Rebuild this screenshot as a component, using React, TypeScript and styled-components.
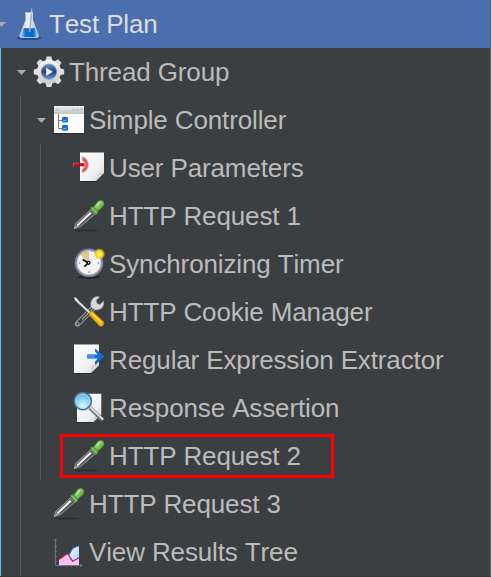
import React from 'react';
import styled, { createGlobalStyle } from 'styled-components';

const GlobalStyle = createGlobalStyle`
  body { margin: 0; background: #3c3f41; }
`;

const TreePanel = styled.div`
  box-sizing: border-box;
  width: 491px;
  height: 577px;
  overflow: hidden;
  display: flex;
  flex-direction: column;
  background: #3c3f41;
  border-right: 1px solid #616263;
  border-bottom: 1px solid #35373a;
  font-family: 'Liberation Sans', Arial, sans-serif;
  font-size: 26px;
  font-kerning: none;
  letter-spacing: -0.13px;
`;

const Row = styled.div<{ $selected?: boolean }>`
  box-sizing: border-box;
  flex: 0 0 48px;
  height: 48px;
  display: flex;
  align-items: center;
  background: ${(p) => (p.$selected ? '#4b6eaf' : '#3c3f41')};
  color: ${(p) => (p.$selected ? '#dcdcdc' : '#bbbbbb')};
  box-shadow: ${(p) => (p.$selected ? 'none' : 'inset 1px 0 0 #72b4f5')};
`;

const Cell = styled.span<{ $first?: boolean; $guide?: boolean }>`
  box-sizing: border-box;
  flex: 0 0 20px;
  height: 48px;
  display: flex;
  align-items: center;
  padding-left: 4px;
  margin-left: ${(p) => (p.$first ? '-7px' : '0')};
  background: ${(p) =>
    p.$guide ? 'linear-gradient(#55585a, #55585a) 7px 0 / 1px 100% no-repeat' : 'none'};
`;

const Arrow = styled.svg`
  flex: none;
  width: 9px;
  height: 5px;
  margin-top: 1px;
  fill: #adadad;
`;

const IconBox = styled.svg`
  flex: 0 0 32px;
  width: 32px;
  height: 32px;
  overflow: visible;
`;

const Label = styled.span`
  margin-left: 4px;
  line-height: 30px;
  white-space: nowrap;
`;

const Highlight = styled.div`
  position: absolute;
  box-sizing: border-box;
  left: 60px;
  top: 434px;
  width: 274px;
  height: 44px;
  border: 3px solid #fe0000;
`;

const FlaskIcon = () => (
  <IconBox viewBox="0 0 32 32">
    <defs>
      <linearGradient id="flGlass" x1="0" x2="1">
        <stop offset="0" stopColor="#b9c6de" />
        <stop offset=".45" stopColor="#fbfcff" />
        <stop offset="1" stopColor="#a9bad9" />
      </linearGradient>
      <linearGradient id="flLiquid" x1="0" x2="1">
        <stop offset="0" stopColor="#8fc5f5" />
        <stop offset=".25" stopColor="#0b72da" />
        <stop offset=".75" stopColor="#0565cf" />
        <stop offset="1" stopColor="#8cbdf0" />
      </linearGradient>
    </defs>
    <ellipse cx="16" cy="30" rx="12.5" ry="2" fill="#1e3768" opacity=".65" />
    <path d="M12.5 5H20V12L25.8 27Q26.6 30 24 30H8.5Q5.7 30 6.5 27L12.5 12Z" fill="url(#flGlass)" opacity=".93" />
    <path d="M10.5 20.8H22L23.8 26.8Q24.2 29.2 22.5 29.2H10Q8.2 29.2 8.6 26.8Z" fill="url(#flLiquid)" />
    <path d="M10.5 20.8H22" stroke="#3059a2" strokeWidth="1" />
    <path d="M18.8 .5L18 11L16.5 24" stroke="#a7b0bf" strokeWidth="1.5" fill="none" />
    <path d="M12 5H20" stroke="#f3f6fc" />
  </IconBox>
);

const TEETH = [0, 45, 90, 135, 180, 225, 270, 315];

const GearIcon = () => (
  <IconBox viewBox="0 0 32 32">
    <defs>
      <linearGradient id="grBody" x1="0" y1="0" x2="0" y2="1">
        <stop offset="0" stopColor="#f7f7f7" />
        <stop offset="1" stopColor="#c9c9c9" />
      </linearGradient>
      <linearGradient id="grBlue" x1="0" y1="0" x2="0" y2="1">
        <stop offset="0" stopColor="#6f8dbb" />
        <stop offset=".5" stopColor="#1f4380" />
        <stop offset="1" stopColor="#6796d3" />
      </linearGradient>
    </defs>
    <g fill="#dedede">
      {TEETH.map((a) => (
        <path key={a} d="M12.5 5L13.6 .6H18.4L19.5 5Z" transform={`rotate(${a} 16 15.8)`} />
      ))}
    </g>
    <circle cx="16" cy="15.8" r="12" fill="url(#grBody)" />
    <circle cx="16" cy="15.8" r="8.2" fill="#a5adbb" />
    <circle cx="16" cy="15.8" r="7.5" fill="url(#grBlue)" />
    <path d="M13.2 11.8L19.8 15.8L13.2 19.8Z" fill="#f2f5fa" />
  </IconBox>
);

const ControllerIcon = () => (
  <IconBox viewBox="0 0 32 32">
    <defs>
      <linearGradient id="ctBar" x1="0" y1="0" x2="0" y2="1">
        <stop offset="0" stopColor="#eeeeee" />
        <stop offset="1" stopColor="#c3c3c3" />
      </linearGradient>
    </defs>
    <path d="M.5 29.5H31.5" stroke="#2a2c2e" />
    <rect x="1" y="2" width="30" height="27" fill="#fdfdfd" />
    <rect x="1" y="2" width="30" height="8" fill="url(#ctBar)" />
    <path d="M3 5.5H6M19 5.5H22M23 5.5H26M27 5.5H30" stroke="#bdbdbd" strokeWidth="1.5" />
    <path d="M5.5 10V24.5H9M5.5 16.5H9" stroke="#707780" fill="none" />
    <rect x="9" y="13" width="6" height="5.5" rx="1.2" fill="#1470d8" />
    <rect x="9" y="21" width="6" height="5.7" rx="1.2" fill="#1470d8" />
    <path d="M10 17L13.5 16M10 25L13.5 24" stroke="#6fb1f5" strokeWidth="1.2" />
  </IconBox>
);

const PageDefs = ({ id }: { id: string }) => (
  <defs>
    <linearGradient id={id} x1="0" y1="0" x2="1" y2="1">
      <stop offset="0" stopColor="#ffffff" />
      <stop offset=".65" stopColor="#f0f0f0" />
      <stop offset="1" stopColor="#cfcfcf" />
    </linearGradient>
  </defs>
);

const ParametersIcon = () => (
  <IconBox viewBox="0 0 32 32">
    <PageDefs id="pgParams" />
    <path d="M6.5 29.5H24" stroke="#27292b" />
    <path d="M7 .5H31V21L23 29H7Z" fill="url(#pgParams)" />
    <path d="M31 21Q28 23 25.5 22.2Q25.5 27 22.5 29Z" fill="#a9aaa9" />
    <path d="M29.5 21.8Q27.5 23.4 26 23L24.5 26.5Z" fill="#ffffff" />
    <path d="M9.2 4.6Q15.3 7 15.3 12.7Q15.3 18.3 9.2 20.8L9.2 17.2Q12.3 15.3 12.3 12.7Q12.3 10 9.2 8.2Z" fill="#dc5658" stroke="#eda2a3" strokeWidth=".8" />
    <path d="M.5 11.2H11.5V14.3H.5Z" fill="#cd0708" />
    <path d="M.5 14.3V11.2H6" stroke="#e6787a" strokeWidth=".6" fill="none" />
  </IconBox>
);

const PipetteIcon = () => (
  <IconBox viewBox="0 0 32 32">
    <defs>
      <linearGradient id="ppBulb" x1="0" y1="0" x2="1" y2="1">
        <stop offset="0" stopColor="#b5e795" />
        <stop offset=".5" stopColor="#7ac558" />
        <stop offset="1" stopColor="#4c9a3c" />
      </linearGradient>
    </defs>
    <ellipse cx="14" cy="30.6" rx="13" ry="1" fill="#202224" opacity=".6" />
    <path d="M1.3 28.4L2.6 23.6L17.6 9.8L21.8 14.2L7.5 26.4Z" fill="#63676a" stroke="#a8abac" strokeWidth=".8" />
    <path d="M4.2 25.6L17.8 12.8" stroke="#f5f5f5" strokeWidth="1.9" />
    <path d="M6.5 25.8L20 14" stroke="#404345" strokeWidth=".9" />
    <path d="M1.4 28.4L5.8 25.2" stroke="#d0d0d0" strokeWidth=".8" />
    <path d="M20.4 7.4L25 1.6Q27.5 -.4 30 1.4Q31.8 4 29.7 6.5L24.6 11.3Z" fill="url(#ppBulb)" stroke="#5aa646" strokeWidth=".5" />
    <path d="M17.3 8Q19 5.7 21.2 7.3L24.8 11Q25.4 13.3 22.8 14.7Z" fill="#64b449" stroke="#3c8632" strokeWidth=".6" />
    <path d="M18.8 8L23.2 12.7" stroke="#8fd071" strokeWidth="1" />
    <path d="M23.7 6.5L27 2.3" stroke="#c5edab" strokeWidth="1.2" />
  </IconBox>
);

const TimerIcon = () => (
  <IconBox viewBox="0 0 32 32">
    <defs>
      <radialGradient id="tmSun">
        <stop offset="0" stopColor="#ffffb0" />
        <stop offset=".4" stopColor="#fff02e" />
        <stop offset="1" stopColor="#e4cc0b" />
      </radialGradient>
    </defs>
    <ellipse cx="16" cy="29" rx="11" ry="1.8" fill="#222426" />
    <circle cx="16" cy="14.8" r="13.2" fill="#f3f3f2" stroke="#8281a7" strokeWidth="2.2" />
    <circle cx="16" cy="14.8" r="12" fill="none" stroke="#c9c7d4" strokeWidth="1" />
    <path d="M15.3 14.6L8.4 6.8Q11.5 4 15.3 4.1Z" fill="#e8cc83" stroke="#c5a557" strokeWidth=".6" />
    <path d="M15.3 15L9.6 11.6M15.5 14.8L11.3 18.7" stroke="#141414" strokeWidth="1.7" />
    <circle cx="15.5" cy="14.8" r="2.1" fill="#080808" />
    <circle cx="15.5" cy="14.8" r=".7" fill="#ffffff" />
    <path d="M16 23.3V25M5.7 15H7.4M24.6 15H26.3" stroke="#9d9da2" strokeWidth="1.6" />
    <circle cx="26.4" cy="6" r="5.4" fill="#e6d535" opacity=".45" />
    <circle cx="26.4" cy="6" r="4.3" fill="url(#tmSun)" />
  </IconBox>
);

const ToolsIcon = () => (
  <IconBox viewBox="0 0 32 32">
    <path d="M4.7 27.8L21 11.3" stroke="#999c9e" strokeWidth="5.6" strokeLinecap="round" />
    <path d="M4.7 27.8L20 12.5" stroke="#3b3d3f" strokeWidth="3.6" strokeLinecap="round" />
    <path d="M9 23.5L20.5 12" stroke="#a4a6a7" strokeWidth="1.1" />
    <circle cx="4.6" cy="27.8" r="1.5" fill="#2e3032" stroke="#c8c8c8" strokeWidth=".8" />
    <path d="M18 11Q16.7 4.7 21 1.5Q24 -.1 26.7 .9L23.2 4.3L24.2 7.7L27.2 8.4L30.5 4.8Q31.7 9.3 28.7 12.2Q25.5 14.7 21.5 13.7Z" fill="#d7d8d8" stroke="#929596" strokeWidth=".6" />
    <path d="M2.3 3.3L18 18" stroke="#686b6d" strokeWidth="2.8" />
    <path d="M2.3 3.2L18 17.9" stroke="#eeeeee" strokeWidth="1.6" />
    <path d="M.7 1.9L2.5 1.2L5.6 4.6L4.4 5.8Z" fill="#f0f0f0" />
    <path d="M17.2 16L19 14.9L30.5 25.7Q31.6 28.5 29 30.3Q27 30.6 25.8 29.3L16.2 18.8Z" fill="#efb408" stroke="#bd8003" strokeWidth=".6" />
    <path d="M18.8 17L28.4 26.6" stroke="#ffe252" strokeWidth="1.7" />
  </IconBox>
);

const ExtractorIcon = () => (
  <IconBox viewBox="0 0 32 32">
    <PageDefs id="pgExtract" />
    <path d="M.5 29.5H18" stroke="#27292b" />
    <path d="M1 .5H26V21.5L18 29H1Z" fill="url(#pgExtract)" />
    <path d="M26 20Q22 23 19 21.5Q20 26 17 29Z" fill="#b4b5b5" />
    <path d="M24.7 21Q22 23 20.6 22.6L19.3 26.2Z" fill="#ffffff" />
    <path d="M22 4.5L31.5 12.5L22 21.3V17.8L24.7 14.4H14.3V10.6H24.7L22 7.6Z" fill="#126bd1" />
    <path d="M14.3 10.6H22V14.4H14.3Z" fill="#448fdf" />
  </IconBox>
);

const AssertionIcon = () => (
  <IconBox viewBox="0 0 32 32">
    <PageDefs id="pgAssert" />
    <defs>
      <radialGradient id="asLens" cx=".5" cy=".75" r=".75">
        <stop offset="0" stopColor="#dcfaff" />
        <stop offset=".4" stopColor="#a0dbf7" />
        <stop offset="1" stopColor="#5ba8e3" />
      </radialGradient>
    </defs>
    <path d="M3.5 30.5H20" stroke="#27292b" />
    <path d="M4 1.8H28.3V23L20.5 30H4Z" fill="url(#pgAssert)" />
    <path d="M28.3 22Q24.5 24 22.5 23Q23 27.5 20 30Z" fill="#b5b6b6" />
    <path d="M16.8 15.8L29.6 28" stroke="#777a7c" strokeWidth="4" />
    <path d="M17 15.2L30.3 27.7" stroke="#e2e3e3" strokeWidth="1.8" />
    <circle cx="9.8" cy="9.2" r="8.5" fill="url(#asLens)" stroke="#46719f" strokeWidth="1.8" />
    <circle cx="9.8" cy="9.2" r="7.2" fill="none" stroke="#b8dcf2" strokeWidth=".9" />
  </IconBox>
);

const ChartIcon = () => (
  <IconBox viewBox="0 0 32 32">
    <defs>
      <linearGradient id="chBlue" x1="0" y1="0" x2="1" y2="1">
        <stop offset="0" stopColor="#ffffff" />
        <stop offset="1" stopColor="#a7cdf7" />
      </linearGradient>
    </defs>
    <path d="M2.5 3V29.5H29" stroke="#74777a" fill="none" />
    <path d="M1 5L2.5 2L4 5ZM27 28L30 29.5L27 31Z" fill="#74777a" />
    <path d="M1 10.5H4M1 15.5H4M1 20.5H4M1 25.5H4M8.5 28.5V31M13.5 28.5V31M18.5 28.5V31M23.5 28.5V31" stroke="#6b6e70" />
    <path d="M15.5 20L20 12.2L26 9.8V22L20 26Z" fill="url(#chBlue)" />
    <path d="M15.5 20L20 12.2L26 9.8" stroke="#3984de" fill="none" strokeWidth="1" />
    <path d="M6 23.5L14.5 17.5L19.6 25.2L26 21.8V29H6Z" fill="#f9c4ef" />
    <path d="M6 23.5L14.5 17.5" stroke="#c62042" strokeWidth="1.2" fill="none" />
    <path d="M14.5 17.5L19.6 25.2L26 21.8" stroke="#a51b96" strokeWidth="1.2" fill="none" />
    <path d="M7 26.5L13 24L17 23.5" stroke="#efaee4" strokeWidth="1" fill="none" />
  </IconBox>
);

interface TreeNode {
  label: string;
  depth: number;
  icon: React.ComponentType;
  open?: boolean;
  selected?: boolean;
}

const nodes: TreeNode[] = [
  { label: 'Test Plan', depth: 0, icon: FlaskIcon, open: true, selected: true },
  { label: 'Thread Group', depth: 1, icon: GearIcon, open: true },
  { label: 'Simple Controller', depth: 2, icon: ControllerIcon, open: true },
  { label: 'User Parameters', depth: 3, icon: ParametersIcon },
  { label: 'HTTP Request 1', depth: 3, icon: PipetteIcon },
  { label: 'Synchronizing Timer', depth: 3, icon: TimerIcon },
  { label: 'HTTP Cookie Manager', depth: 3, icon: ToolsIcon },
  { label: 'Regular Expression Extractor', depth: 3, icon: ExtractorIcon },
  { label: 'Response Assertion', depth: 3, icon: AssertionIcon },
  { label: 'HTTP Request 2', depth: 3, icon: PipetteIcon },
  { label: 'HTTP Request 3', depth: 2, icon: PipetteIcon },
  { label: 'View Results Tree', depth: 2, icon: ChartIcon },
];

export default function App() {
  return (
    <>
      <GlobalStyle />
      <TreePanel>
        {nodes.map(({ label, depth, icon: Icon, open, selected }) => (
          <Row key={label} $selected={selected}>
            {Array.from({ length: depth + 1 }, (_, i) => (
              <Cell key={i} $first={i === 0} $guide={i > 0 && i < depth}>
                {open && i === depth && (
                  <Arrow viewBox="0 0 9 5">
                    <path d="M0 0H9L4.5 5Z" />
                  </Arrow>
                )}
              </Cell>
            ))}
            <Icon />
            <Label>{label}</Label>
          </Row>
        ))}
      </TreePanel>
      <Highlight />
    </>
  );
}
